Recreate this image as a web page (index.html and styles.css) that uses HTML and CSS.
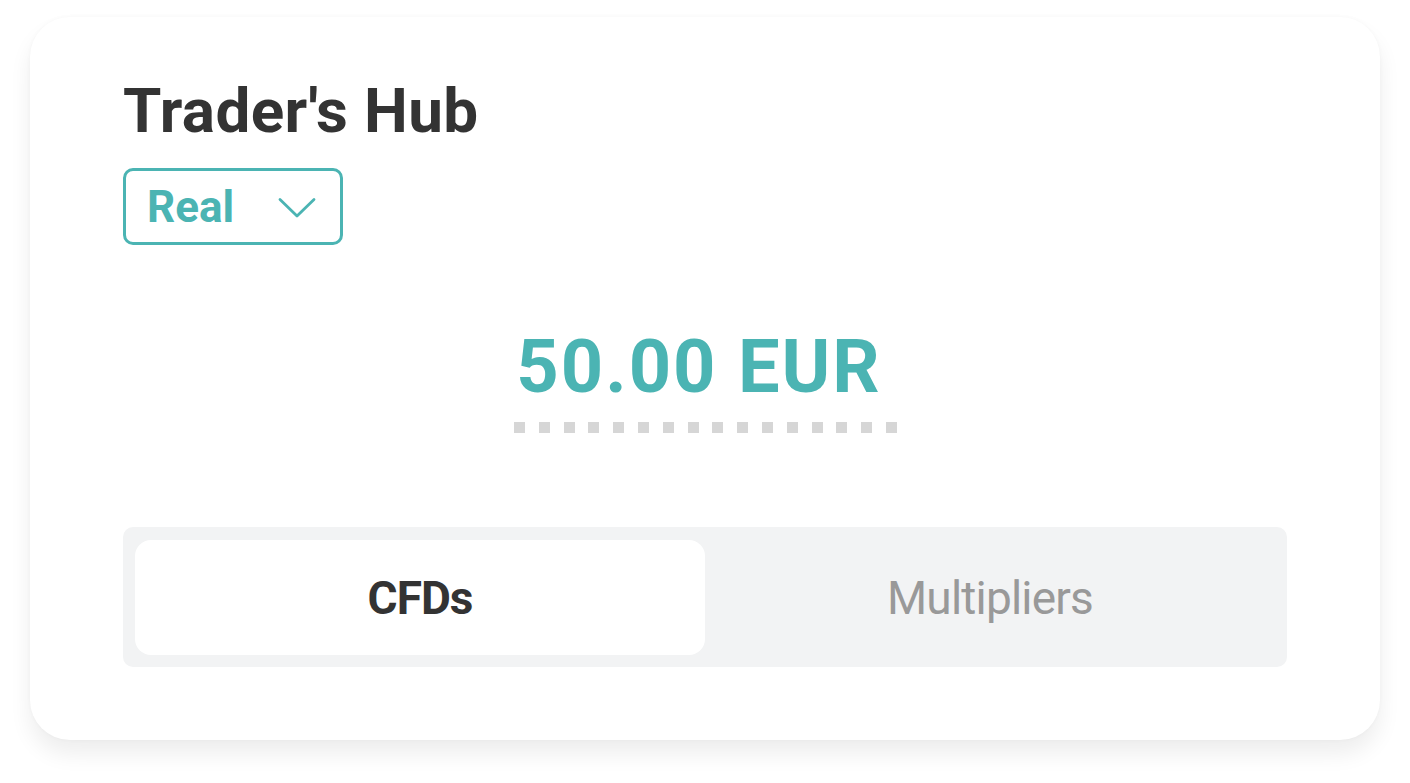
FILE: index.html
```html
<!DOCTYPE html>
<html lang="en">
<head>
<meta charset="utf-8">
<title>Trader's Hub</title>
<link rel="stylesheet" href="styles.css">
</head>
<body>
<div class="card">
  <h1 class="title">Trader's Hub</h1>
  <div class="select-row">
    <button class="account-select">
      <span class="account-label">Real</span>
      <svg class="chevron" width="38" height="22" viewBox="0 0 38 22" aria-hidden="true">
        <path d="M2 2.5 L19 19 L36 2.5" fill="none" stroke="#4bb4b3" stroke-width="2.8" stroke-linecap="round" stroke-linejoin="round"/>
      </svg>
    </button>
  </div>
  <div class="balance">
    <div class="amount">50.00 EUR</div>
    <div class="dots"></div>
  </div>
  <div class="tabs">
    <div class="tab tab-active">CFDs</div>
    <div class="tab">Multipliers</div>
  </div>
</div>
</body>
</html>
```

FILE: styles.css
```css
html, body {
  margin: 0;
  padding: 0;
  background: #ffffff;
}

body {
  font-family: Roboto, "Noto Sans", "Liberation Sans", sans-serif;
  padding: 17px 30px 43px;
}

.card {
  box-sizing: border-box;
  width: 1350px;
  height: 723px;
  background: #ffffff;
  border-radius: 40px;
  box-shadow: 0 14px 22px rgba(0, 0, 0, 0.07), 0 0 4px rgba(0, 0, 0, 0.03);
  padding: 0 93px;
  display: flex;
  flex-direction: column;
}

.title {
  margin: 58px 0 0;
  font-size: 62px;
  line-height: 72px;
  font-weight: 700;
  color: #333333;
  letter-spacing: 0.4px;
}

.select-row {
  margin-top: 21px;
  display: flex;
}

.account-select {
  box-sizing: border-box;
  width: 220px;
  height: 77px;
  border: 3px solid #4bb4b3;
  border-radius: 10px;
  background: #ffffff;
  padding: 0 24px 0 21px;
  display: flex;
  align-items: center;
  justify-content: space-between;
  font-family: inherit;
}

.account-label {
  font-size: 44px;
  line-height: 44px;
  font-weight: 700;
  color: #4bb4b3;
}

.chevron {
  display: block;
  margin-top: 2px;
}

.balance {
  margin-top: 77px;
  display: flex;
  flex-direction: column;
  align-items: center;
}

.amount {
  font-size: 74px;
  line-height: 90px;
  font-weight: 700;
  color: #4bb4b3;
  letter-spacing: 2px;
  margin-right: 12px;
}

.dots {
  margin-top: 10px;
  width: 383px;
  height: 11px;
  background: repeating-linear-gradient(to right, #d6d6d6 0 11px, transparent 11px 24.8px);
}

.tabs {
  margin-top: 94px;
  box-sizing: border-box;
  height: 140px;
  background: #f2f3f4;
  border-radius: 10px;
  padding: 13px 12px 12px;
  display: grid;
  grid-template-columns: 1fr 1fr;
}

.tab {
  display: flex;
  align-items: center;
  justify-content: center;
  font-size: 46px;
  line-height: 46px;
  color: #999999;
  letter-spacing: -0.8px;
  border-radius: 16px;
}

.tab-active {
  background: #ffffff;
  color: #333333;
  font-weight: 700;
  letter-spacing: -1px;
}
```
